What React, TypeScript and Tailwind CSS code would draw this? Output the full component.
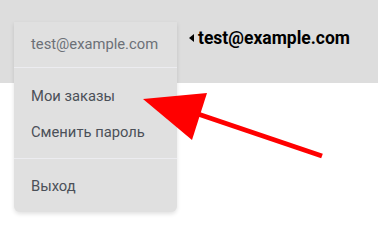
export default function App() {
  return (
    <div className="relative w-[378px] h-[225px] bg-white overflow-hidden" style={{ fontFamily: 'Roboto, "Liberation Sans", sans-serif' }}>
      {/* top bar */}
      <header className="h-[83px] bg-[#dddddd] flex items-start">
        <div className="ml-[189px] mt-[27px] flex items-center gap-[4px]">
          <span className="w-0 h-0 border-y-[4px] border-y-transparent border-r-[5px] border-r-black" />
          <span className="text-[17.5px] font-bold text-black leading-[22px]">test@example.com</span>
        </div>
      </header>

      {/* dropdown menu */}
      <div className="absolute left-[14px] top-[22px] w-[163px] bg-[#e0e0e0] rounded-b-[6px] shadow-[0_2px_4px_rgba(0,0,0,0.12)]">
        <div className="h-[45px] flex items-center px-[17px] text-[14.75px] text-[#6c7077]">test@example.com</div>
        <div className="h-px bg-[#ececf0]" />
        <div className="pt-[10px] pb-2">
          <div className="h-9 flex items-center px-[17px] text-[14.75px] text-[#4b5058]">Мои заказы</div>
          <div className="h-9 flex items-center px-[17px] text-[14.75px] text-[#4b5058]">Сменить пароль</div>
        </div>
        <div className="h-px bg-[#ececf0]" />
        <div className="pt-[9px] pb-2">
          <div className="h-9 flex items-center px-[17px] text-[14.75px] text-[#4b5058]">Выход</div>
        </div>
      </div>

      {/* red arrow annotation */}
      <svg className="absolute left-0 top-0" width="378" height="225" viewBox="0 0 378 225">
        <line x1="198" y1="114" x2="322" y2="156" stroke="#ff0000" strokeWidth="5" />
        <polygon points="143,99 207,93 192,140" fill="#ff0000" />
      </svg>
    </div>
  );
}
